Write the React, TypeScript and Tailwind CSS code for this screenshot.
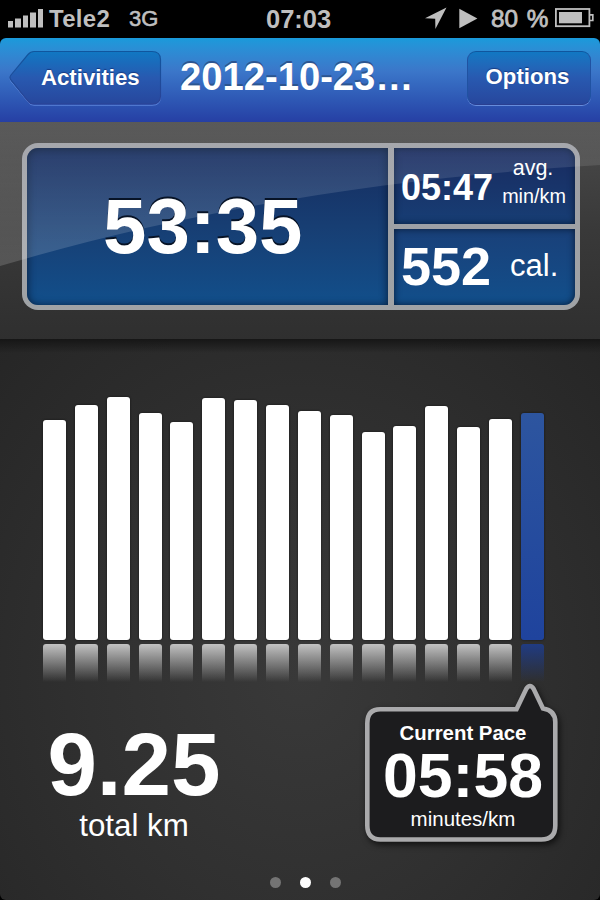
import React from "react";

const barTops = [419.5, 404.5, 397, 413, 422, 398, 400, 404.7, 411, 415.3, 432, 426, 405.5, 426.5, 419, 412.5];
const baseline = 640;

function StatusBar() {
  return (
    <header className="flex h-[38px] items-center bg-black pl-[8px] text-[#bfbfbf]">
      <svg className="mt-[-3px] shrink-0" width="36" height="20" viewBox="0 0 36 20" fill="#bfbfbf">
        <rect x="0" y="13" width="5" height="6.500" />
        <rect x="7" y="10.500" width="6" height="9" />
        <rect x="15" y="7.500" width="5" height="12" />
        <rect x="22" y="4.500" width="6" height="15" />
        <rect x="30" y="1" width="5" height="18.500" />
      </svg>
      <span className="ml-[5px] w-[80px] text-[24px] leading-[38px] font-bold tracking-[0.3px]">Tele2</span>
      <span className="w-[137px] text-[22px] leading-[38px] [-webkit-text-stroke:0.6px_#bfbfbf]">3G</span>
      <span className="w-[159px] text-[25.500px] leading-[36px] font-bold">07:03</span>
      <svg className="shrink-0" width="54" height="38" viewBox="0 0 54 38" fill="#bfbfbf">
        <path d="M21.500 7.500L0 18.200L10.200 18.800L10.400 29Z" />
        <path d="M34.300 8.800V28.200L52.400 18.500Z" />
      </svg>
      <span className="ml-[12px] w-[64px] whitespace-nowrap text-[24.300px] leading-[38px] [word-spacing:2px] [-webkit-text-stroke:0.8px_#bfbfbf]">80 %</span>
      <svg className="mt-[-2px] shrink-0" width="40" height="20" viewBox="0 0 40 20" fill="none" stroke="#bfbfbf">
        <rect x="0.900" y="1" width="33.500" height="17.200" strokeWidth="1.800" />
        <rect x="4" y="4" width="23" height="11.300" fill="#bfbfbf" stroke="none" />
        <path d="M35 6.800H37.800V12.500H35" strokeWidth="1.700" />
      </svg>
    </header>
  );
}

function NavigationBar() {
  return (
    <nav className="flex h-[84px] shrink-0 items-start rounded-t-[6px] bg-linear-to-b from-[#199adb] via-[#3b76c9] via-40% to-[#263fa4] pl-[9px] pt-[12px] text-white">
      <button className="relative h-[56px] w-[154px] text-left">
        <svg className="absolute inset-0" width="154" height="56" viewBox="0 0 154 56">
          <defs>
            <linearGradient id="back" x1="0" y1="0" x2="0" y2="1">
              <stop offset="0" stopColor="#1078c3" />
              <stop offset="0.500" stopColor="#2859b0" />
              <stop offset="1" stopColor="#27479d" />
            </linearGradient>
            <linearGradient id="edge" x1="0" y1="0" x2="0" y2="1">
              <stop offset="0" stopColor="#10569e" />
              <stop offset="1" stopColor="#2b4296" />
            </linearGradient>
          </defs>
          <path d="M25 2.500H143Q151.500 2.500 151.500 10.500V47.500Q151.500 55.300 143 55.300H25Q21 55.300 19 52L2 31.500Q0 29 2 26.500L19 6Q21.500 2.500 25 2.500Z" fill="none" stroke="#709aeb" opacity=".65" />
          <path d="M25 1.500H143Q151.500 1.500 151.500 9.500V46Q151.500 54 143 54H25Q21 54 19 51L2 30Q0 27.500 2 25L19 4.500Q21.500 1.500 25 1.500Z" fill="url(#back)" stroke="url(#edge)" strokeWidth="1.200" />
        </svg>
        <span className="relative block pl-[32px] text-[22.200px] leading-[54px] font-bold [text-shadow:0_-1px_1px_#173a81]">Activities</span>
      </button>
      <h1 className="ml-[17px] w-[287px] whitespace-nowrap text-[38.200px] leading-[54px] font-bold [text-shadow:0_-2px_0_#2c5590]">2012-10-23…</h1>
      <button className="mt-px flex h-[54px] w-[124px] items-start justify-center rounded-[9px] border border-t-[#10569e] border-x-[#2052a2] border-b-[#2a3f91] bg-linear-to-b from-[#1078c3] via-[#2859b0] to-[#27479d] pr-[3px] text-[22.200px] leading-[50px] font-bold shadow-[0_1px_0_#668cdc] [text-shadow:0_-1px_1px_#173a81]">Options</button>
    </nav>
  );
}

function Summary() {
  return (
    <section className="relative h-[217px] shrink-0 bg-linear-to-b from-[#4b4b4b] via-[#393939] to-[#2f2f2f] px-[21.500px] pt-[21px]">
      <div className="flex h-[167px] w-[558.500px] gap-[5.500px] rounded-[16px] bg-linear-to-b from-[#9c9ea4] to-[#a0a3a6] p-[5px]">
        <div className="h-full w-[361.500px] rounded-l-[11px] bg-linear-to-b from-[#152b5e] via-[#173e73] to-[#114f8b] shadow-[inset_0_1px_8px_#071a35]" />
        <div className="flex flex-1 flex-col gap-[5px]">
          <div className="flex-1 rounded-tr-[11px] bg-linear-to-b from-[#182a5f] to-[#173e75] shadow-[inset_0_0_7px_#071a35]" />
          <div className="flex-1 rounded-br-[11px] bg-linear-to-b from-[#194079] to-[#114f8b] shadow-[inset_0_0_7px_#071a35]" />
        </div>
      </div>
      <svg className="absolute inset-0" width="600" height="217" viewBox="0 0 600 217">
        <defs>
          <linearGradient id="gloss" x1="0" y1="0" x2="0" y2="1">
            <stop offset="0" stopColor="white" stopOpacity=".08" />
            <stop offset="1" stopColor="white" stopOpacity=".16" />
          </linearGradient>
        </defs>
        <path d="M0 0H600V43C400 55 200 85 0 144Z" fill="url(#gloss)" />
      </svg>
      <div className="absolute inset-0 flex pl-[103px] pt-[26px] text-white">
        <div className="w-[298px] text-[78px] leading-[156px] font-bold [text-shadow:0_-2px_0_#071326]">53:35</div>
        <div className="flex flex-col">
          <div className="flex h-[78px]">
            <strong className="w-[101px] text-[36px] leading-[79px]">05:47</strong>
            <div className="w-[64px] pt-[6px] text-center text-[21.500px] leading-[28px]">
              <div className="ml-[-2px]">avg.</div>
              <div className="mx-[-4px] text-[19.800px]">min/km</div>
            </div>
          </div>
          <div className="flex h-[83px]">
            <strong className="w-[109px] text-[54px] leading-[80px]">552</strong>
            <span className="text-[31px] leading-[80px]">cal.</span>
          </div>
        </div>
      </div>
    </section>
  );
}

function PaceBubble() {
  return (
    <div className="relative h-[164px] w-[200px] text-center text-white">
      <svg className="absolute inset-0 overflow-visible drop-shadow-[2px_3px_3px_rgba(0,0,0,0.65)]" width="200" height="164" viewBox="0 0 200 164">
        <path d="M17.300 27.300H153.500L163.200 7Q167 1 170.700 7L180 26.500Q192.300 28.500 192.300 40V143.500Q192.300 157.500 178.300 157.500H17.300Q4.300 157.500 4.300 143.500V41.300Q4.300 27.300 17.300 27.300Z" fill="#1c1c1e" stroke="#aaaaac" strokeWidth="4.600" />
      </svg>
      <div className="relative w-[200px] pt-[38px]">
        <div className="text-[20.400px] leading-[27px] font-bold">Current Pace</div>
        <div className="text-[62.500px] leading-[57px] font-bold">05:58</div>
        <div className="text-[20.500px] leading-[30px]">minutes/km</div>
      </div>
    </div>
  );
}

function Activity() {
  return (
    <main className="flex h-[561px] flex-col rounded-b-[6px] bg-[radial-gradient(ellipse_at_50%_60%,#393939_0%,#303030_50%,#262626_100%)]">
      <div className="h-[14px] shrink-0 bg-linear-to-b from-[#161616] to-transparent" />
      <div className="flex h-[287px] shrink-0 items-end gap-[8.870px] pl-[43px]">
        {barTops.map((top, index) => (
          <div
            key={index}
            style={{ height: baseline - top }}
            className={index === 15
              ? "w-[23px] rounded-[3px] bg-linear-to-b from-[#2d559f] to-[#1f439d] shadow-[0_0_2px_#111]"
              : "w-[23px] rounded-[3px] bg-white shadow-[0_0_2px_#111]"}
          />
        ))}
      </div>
      <div className="mt-[4px] flex h-[38px] shrink-0 gap-[8.870px] pl-[43px]">
        {barTops.map((_, index) => (
          <div
            key={index}
            className={index === 15
              ? "h-full w-[23px] rounded-t-[3px] bg-linear-to-b from-[#203b82] to-transparent"
              : "h-full w-[23px] rounded-t-[3px] bg-linear-to-b from-[#c2c2c2] to-transparent"}
          />
        ))}
      </div>
      <div className="flex h-[166px] shrink-0 pl-[34px] text-white">
        <div className="w-[200px] pt-[38px] text-center">
          <div className="text-[89px] leading-[88px] font-bold">9.25</div>
          <div className="text-[31.300px] leading-[36px]">total km</div>
        </div>
        <div className="ml-[129px]"><PaceBubble /></div>
      </div>
      <div className="mt-[29px] flex justify-center gap-[19px] pl-[11px]">
        <span className="size-[11px] rounded-full bg-[#747474]" />
        <span className="size-[11px] rounded-full bg-white" />
        <span className="size-[11px] rounded-full bg-[#747474]" />
      </div>
    </main>
  );
}

export default function App() {
  return (
    <div className="h-[900px] w-[600px] overflow-hidden bg-black font-['Liberation_Sans',Arial,sans-serif]">
      <StatusBar />
      <NavigationBar />
      <Summary />
      <Activity />
    </div>
  );
}
